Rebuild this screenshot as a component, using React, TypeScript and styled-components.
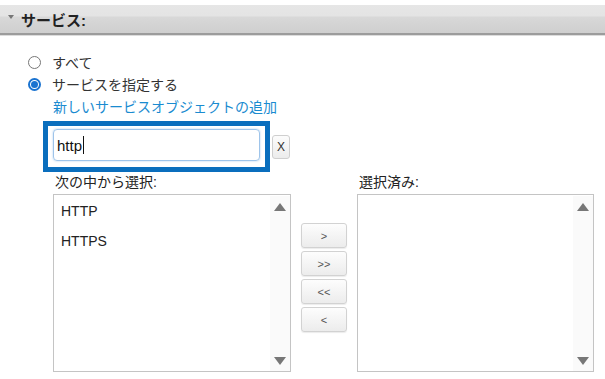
import React from "react";
import styled, { createGlobalStyle } from "styled-components";

const Global = createGlobalStyle`
  html, body { margin: 0; padding: 0; background: #fff; }
  body { font-family: "Liberation Sans", "Noto Sans CJK JP", sans-serif; color: #222; }
`;

const Page = styled.div`
  width: 605px;
  height: 379px;
  padding-top: 5px;
  box-sizing: border-box;
  overflow: hidden;
`;

const Header = styled.div`
  height: 28px;
  display: flex;
  align-items: center;
  gap: 7px;
  padding-left: 8px;
  background: linear-gradient(#e6e6e6 0, #e4e4e4 11px, #d8d8d8 12px, #cfcfcf 100%);
  border-bottom: 2px solid #9c9c9c;
  box-shadow: 0 1px 0 #dcdcdc;
`;

const Caret = styled.span`
  width: 0;
  height: 0;
  border-left: 3px solid transparent;
  border-right: 3px solid transparent;
  border-top: 4px solid #777;
  margin-top: -4px;
`;

const Title = styled.span`
  font-weight: bold;
  font-size: 15px;
  color: #222;
  margin-top: 1px;
`;

const Body = styled.div`
  padding: 16px 0 0 28px;
`;

const RadioRow = styled.label`
  display: flex;
  align-items: center;
  gap: 11px;
  height: 22px;
  font-size: 14px;
  color: #333;
`;

const Radio = styled.span<{ $on?: boolean }>`
  width: 13px;
  height: 13px;
  box-sizing: border-box;
  border-radius: 50%;
  border: ${(p) => (p.$on ? "2px solid #1a73d0" : "1px solid #777")};
  display: flex;
  align-items: center;
  justify-content: center;
  &::after {
    content: "";
    display: ${(p) => (p.$on ? "block" : "none")};
    width: 7px;
    height: 7px;
    border-radius: 50%;
    background: #1a73d0;
  }
`;

const Link = styled.a`
  display: block;
  margin: 2px 0 0 25px;
  font-size: 14px;
  line-height: 20px;
  color: #1a8bd0;
  text-decoration: none;
`;

const SearchRow = styled.div`
  display: flex;
  align-items: center;
  gap: 2px;
  margin: 4px 0 0 15px;
`;

const Highlight = styled.div`
  width: 227px;
  height: 51px;
  box-sizing: border-box;
  border: 5px solid #0a6ebd;
  padding: 3px 5px 0 5px;
`;

const Input = styled.div`
  height: 32px;
  box-sizing: border-box;
  border: 1px solid #9ec4ea;
  border-radius: 4px;
  box-shadow: 0 0 2px rgba(80, 150, 220, 0.5);
  display: flex;
  align-items: center;
  padding-left: 3px;
  font-size: 15px;
  color: #111;
`;

const Cursor = styled.span`
  display: inline-block;
  width: 1px;
  height: 18px;
  background: #111;
  margin-left: 1px;
`;

const ClearButton = styled.button`
  width: 18px;
  height: 24px;
  padding: 0;
  border: 1px solid #cfcfcf;
  border-radius: 3px;
  background: linear-gradient(#fcfcfc, #ececec);
  font-family: "Liberation Sans", sans-serif;
  font-size: 12px;
  color: #333;
`;

const Columns = styled.div`
  display: flex;
  gap: 10px;
  margin: 1px 0 0 25px;
`;

const Column = styled.div`
  display: flex;
  flex-direction: column;
`;

const ColLabel = styled.div`
  font-size: 14px;
  height: 21px;
  line-height: 18px;
  padding-left: 2px;
  color: #222;
`;

const ListBox = styled.div<{ $w: number }>`
  width: ${(p) => p.$w}px;
  height: 178px;
  box-sizing: border-box;
  border: 1px solid #c4c4c4;
  padding-top: 1px;
  display: flex;
`;

const Items = styled.div`
  flex: 1;
  padding-left: 7px;
`;

const Item = styled.div`
  height: 30px;
  line-height: 30px;
  font-size: 14px;
  color: #222;
`;

const Scroll = styled.div`
  width: 20px;
  background: #fafafa;
  display: flex;
  flex-direction: column;
  justify-content: space-between;
  align-items: center;
  padding: 7px 0 6px;
`;

const Arrow = styled.span<{ $down?: boolean }>`
  width: 0;
  height: 0;
  border-left: 6px solid transparent;
  border-right: 6px solid transparent;
  ${(p) => (p.$down ? "border-top: 8px solid #777;" : "border-bottom: 8px solid #777;")}
`;

const Buttons = styled.div`
  display: flex;
  flex-direction: column;
  gap: 3px;
  padding-top: 50px;
`;

const MoveButton = styled.button`
  width: 46px;
  height: 25px;
  padding: 0;
  border: 1px solid #d2d2d2;
  border-radius: 3px;
  background: linear-gradient(#fdfdfd, #ececec);
  box-shadow: 0 1px 1px rgba(0, 0, 0, 0.08);
  font-family: "Liberation Sans", sans-serif;
  font-size: 11px;
  color: #555;
`;

function List({ w, items }: { w: number; items: string[] }) {
  return (
    <ListBox $w={w}>
      <Items>
        {items.map((i) => (
          <Item key={i}>{i}</Item>
        ))}
      </Items>
      <Scroll>
        <Arrow />
        <Arrow $down />
      </Scroll>
    </ListBox>
  );
}

export default function App() {
  return (
    <Page>
      <Global />
      <Header>
        <Caret />
        <Title>サービス:</Title>
      </Header>
      <Body>
        <RadioRow>
          <Radio />
          すべて
        </RadioRow>
        <RadioRow>
          <Radio $on />
          サービスを指定する
        </RadioRow>
        <Link>新しいサービスオブジェクトの追加</Link>
        <SearchRow>
          <Highlight>
            <Input>
              http
              <Cursor />
            </Input>
          </Highlight>
          <ClearButton>X</ClearButton>
        </SearchRow>
        <Columns>
          <Column>
            <ColLabel>次の中から選択:</ColLabel>
            <List w={238} items={["HTTP", "HTTPS"]} />
          </Column>
          <Buttons>
            <MoveButton>&gt;</MoveButton>
            <MoveButton>&gt;&gt;</MoveButton>
            <MoveButton>&lt;&lt;</MoveButton>
            <MoveButton>&lt;</MoveButton>
          </Buttons>
          <Column>
            <ColLabel>選択済み:</ColLabel>
            <List w={237} items={[]} />
          </Column>
        </Columns>
      </Body>
    </Page>
  );
}
